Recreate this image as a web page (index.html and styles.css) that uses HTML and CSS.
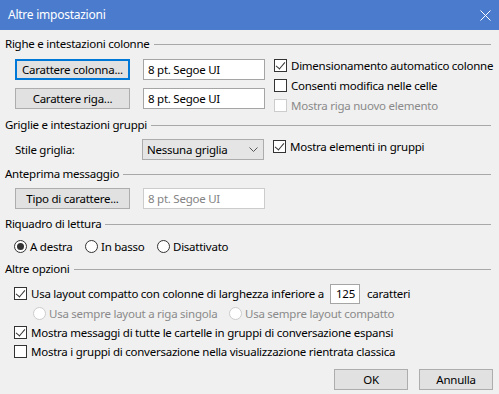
FILE: index.html
```html
<!DOCTYPE html>
<html lang="it">
<head>
  <meta charset="UTF-8" />
  <title>Altre impostazioni</title>
  <link rel="stylesheet" href="styles.css">
</head>
<body>
  <div class="window">
    <div class="titlebar">
      <span class="title">Altre impostazioni</span>
      <svg class="close" width="11" height="11" viewBox="0 0 11 11">
        <path d="M0.5 0.5 L10.5 10.5 M10.5 0.5 L0.5 10.5" stroke="#fff" stroke-width="1" fill="none"/>
      </svg>
    </div>

    <div class="content">
      <!-- Righe e intestazioni colonne -->
      <section class="group g-columns">
        <div class="group-head"><span>Righe e intestazioni colonne</span></div>
        <div class="group-body split">
          <div class="fonts">
            <div class="row">
              <button class="btn focused">Carattere colonna...</button>
              <div class="field">8 pt. Segoe UI</div>
            </div>
            <div class="row">
              <button class="btn">Carattere riga...</button>
              <div class="field">8 pt. Segoe UI</div>
            </div>
          </div>
          <div class="checks">
            <label class="check"><span class="box on"></span>Dimensionamento automatico colonne</label>
            <label class="check"><span class="box"></span>Consenti modifica nelle celle</label>
            <label class="check disabled"><span class="box"></span>Mostra riga nuovo elemento</label>
          </div>
        </div>
      </section>

      <!-- Griglie e intestazioni gruppi -->
      <section class="group g-grid">
        <div class="group-head"><span>Griglie e intestazioni gruppi</span></div>
        <div class="group-body split">
          <div class="row grid-row">
            <span class="row-label">Stile griglia:</span>
            <div class="select">
              <span>Nessuna griglia</span>
              <svg width="9" height="5" viewBox="0 0 9 5"><path d="M0.5 0.5 L4.5 4.5 L8.5 0.5" stroke="#555" fill="none"/></svg>
            </div>
          </div>
          <div class="checks">
            <label class="check"><span class="box on"></span>Mostra elementi in gruppi</label>
          </div>
        </div>
      </section>

      <!-- Anteprima messaggio -->
      <section class="group g-preview">
        <div class="group-head"><span>Anteprima messaggio</span></div>
        <div class="group-body">
          <div class="row">
            <button class="btn">Tipo di carattere...</button>
            <div class="field disabled">8 pt. Segoe UI</div>
          </div>
        </div>
      </section>

      <!-- Riquadro di lettura -->
      <section class="group g-reading">
        <div class="group-head"><span>Riquadro di lettura</span></div>
        <div class="group-body radios">
          <label class="radio r-right"><span class="dot on"></span>A destra</label>
          <label class="radio r-bottom"><span class="dot"></span>In basso</label>
          <label class="radio"><span class="dot"></span>Disattivato</label>
        </div>
      </section>

      <!-- Altre opzioni -->
      <section class="group g-other">
        <div class="group-head"><span>Altre opzioni</span></div>
        <div class="group-body">
          <div class="opt first">
            <label class="check"><span class="box on"></span>Usa layout compatto con colonne di larghezza inferiore a</label>
            <div class="num">125</div>
            <span>caratteri</span>
          </div>
          <div class="opt sub">
            <label class="radio disabled r-single"><span class="dot"></span>Usa sempre layout a riga singola</label>
            <label class="radio disabled"><span class="dot"></span>Usa sempre layout compatto</label>
          </div>
          <div class="opt">
            <label class="check"><span class="box on"></span>Mostra messaggi di tutte le cartelle in gruppi di conversazione espansi</label>
          </div>
          <div class="opt">
            <label class="check"><span class="box"></span>Mostra i gruppi di conversazione nella visualizzazione rientrata classica</label>
          </div>
        </div>
      </section>
    </div>

    <div class="footer">
      <button class="btn small">OK</button>
      <button class="btn small">Annulla</button>
    </div>
  </div>
</body>
</html>
```

FILE: styles.css
```css
* {
  box-sizing: border-box;
}

body {
  margin: 0;
  font-family: "Noto Sans", "Segoe UI", sans-serif;
  font-size: 11.5px;
  letter-spacing: -0.25px;
  color: #000;
  background: #f0f0f0;
}

.window {
  width: 499px;
  height: 394px;
  background: #f0f0f0;
  overflow: hidden;
}

.titlebar {
  height: 30px;
  background: #4a7bcd;
  color: #fff;
  display: flex;
  align-items: center;
  justify-content: space-between;
  padding: 0 8px 1px 8px;
  font-size: 12px;
}

.close {
  margin-top: 1px;
}

.content {
  padding: 0 8px 0 5px;
}

/* group header with a rule after the label */
.group-head {
  height: 16px;
  display: flex;
  align-items: center;
  gap: 4px;
  line-height: 16px;
}

.group-head::after {
  content: "";
  flex: 1;
  border-top: 1px solid #a8a8a8;
  margin-top: 1px;
}

.group-body {
  padding-left: 10px;
}

.split {
  display: flex;
  align-items: flex-start;
}

.row {
  display: flex;
  align-items: center;
  gap: 13px;
  height: 21px;
}

.btn {
  font: inherit;
  letter-spacing: inherit;
  color: #000;
  width: 115px;
  height: 21px;
  padding: 0;
  background: #e1e1e1;
  border: 1px solid #adadad;
}

.btn.focused {
  border: 2px solid #0078d7;
}

.field {
  width: 122px;
  height: 21px;
  background: #fff;
  border: 1px solid #a5a5a5;
  padding: 0 4px;
  line-height: 19px;
}

.field.disabled {
  color: #838383;
  border-color: #cccccc;
}

.checks {
  margin-left: 9px;
}

.check,
.radio {
  display: flex;
  align-items: center;
  height: 20px;
  white-space: nowrap;
}

.box {
  width: 13px;
  height: 13px;
  border: 1px solid #333;
  background: #fff;
  margin-right: 4px;
  flex-shrink: 0;
  position: relative;
}

.box.on::after {
  content: "";
  position: absolute;
  left: 3px;
  top: 0px;
  width: 4px;
  height: 8px;
  border-right: 1px solid #333;
  border-bottom: 1px solid #333;
  transform: rotate(40deg);
}

.disabled {
  color: #8a8a8a;
}

.disabled .box,
.disabled .dot {
  border-color: #cccccc;
  background: #fff;
}

.dot {
  width: 13px;
  height: 13px;
  border: 1px solid #333;
  border-radius: 50%;
  background: #fff;
  margin-right: 3px;
  flex-shrink: 0;
  display: flex;
  align-items: center;
  justify-content: center;
}

.dot.on::after {
  content: "";
  width: 7px;
  height: 7px;
  border-radius: 50%;
  background: #333;
}

/* Righe e intestazioni colonne */
.g-columns {
  margin-top: 6px;
}

.g-columns .group-body {
  height: 57px;
}

.g-columns .fonts {
  padding-top: 7px;
  display: flex;
  flex-direction: column;
  gap: 8px;
}

.g-columns .checks {
  padding-top: 3px;
}

/* Griglie e intestazioni gruppi */
.g-grid {
  margin-top: 8px;
}

.g-grid .group-body {
  padding-top: 3px;
}

.grid-row {
  margin-top: 3px;
  gap: 0;
}

.row-label {
  width: 127px;
}

.select {
  width: 122px;
  height: 21px;
  background: #e5e5e5;
  border: 1px solid #acacac;
  display: flex;
  align-items: center;
  justify-content: space-between;
  padding: 0 5px 0 4px;
}

/* Anteprima messaggio */
.g-preview {
  margin-top: 6px;
}

.g-preview .group-body {
  padding-top: 6px;
}

/* Riquadro di lettura */
.g-reading {
  margin-top: 7px;
}

.radios {
  display: flex;
  padding-top: 4px;
  padding-left: 9px;
}

.r-right {
  width: 71px;
}

.r-bottom {
  width: 72px;
}

/* Altre opzioni */
.g-other {
  margin-top: 5px;
}

.g-other .group-body {
  padding-top: 6px;
  padding-left: 9px;
}

.opt {
  display: flex;
  align-items: center;
  height: 19px;
}

.opt.first {
  height: 21px;
}

.num {
  width: 30px;
  height: 20px;
  background: #fff;
  border: 1px solid #a5a5a5;
  line-height: 18px;
  padding-left: 5px;
  margin: 0 7px 0 6px;
}

.opt.sub {
  padding-left: 19px;
}

.r-single {
  width: 196px;
}

.footer {
  display: flex;
  justify-content: flex-end;
  gap: 11px;
  padding: 8px 6px 0 0;
}

.btn.small {
  width: 74px;
}
```
